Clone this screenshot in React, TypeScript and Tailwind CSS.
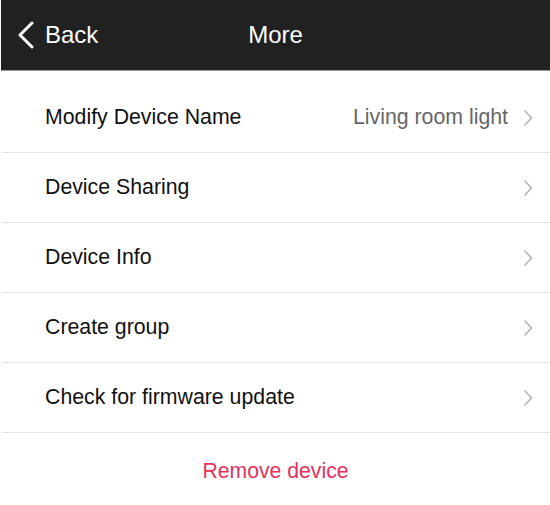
const rows = [
  { label: 'Modify Device Name', value: 'Living room light' },
  { label: 'Device Sharing' },
  { label: 'Device Info' },
  { label: 'Create group' },
  { label: 'Check for firmware update' },
];

function Chevron({ className }: { className?: string }) {
  return (
    <svg width="10" height="18" viewBox="0 0 10 18" className={className} fill="none">
      <path d="M2 2 L8.5 9 L2 16" stroke="currentColor" strokeWidth="1.6" strokeLinecap="round" strokeLinejoin="round" />
    </svg>
  );
}

export default function App() {
  return (
    <div className="w-[550px] h-[505px] bg-white overflow-hidden pl-px" style={{ fontFamily: '"Liberation Sans", Arial, sans-serif' }}>
      <div className="h-[71px] bg-[#212121] border-b border-[#9a9a9a] flex items-center relative">
        <div className="flex items-center pl-[16px] text-white">
          <svg width="18" height="28" viewBox="0 0 18 28" fill="none">
            <path d="M15 2 L3 14 L15 26" stroke="white" strokeWidth="3" strokeLinecap="round" strokeLinejoin="round" />
          </svg>
          <span className="ml-[10px] text-[24px] leading-none">Back</span>
        </div>
        <div className="absolute left-0 right-0 text-center text-white text-[24px] leading-none pointer-events-none">More</div>
      </div>

      <div className="pt-[12px]">
        {rows.map((r) => (
          <div key={r.label} className="h-[70px] flex items-center border-b border-[#e4e4e4] ml-px pl-[43px] pr-[17px]">
            <span className="flex-1 text-[21.3px] text-[#111]">{r.label}</span>
            {r.value && <span className="text-[21.3px] text-[#666] mr-[15px]">{r.value}</span>}
            <Chevron className="text-[#b3b3b3]" />
          </div>
        ))}
      </div>

      <div className="h-[76px] flex items-center justify-center text-[21.2px] text-[#e5315a]">Remove device</div>
    </div>
  );
}
